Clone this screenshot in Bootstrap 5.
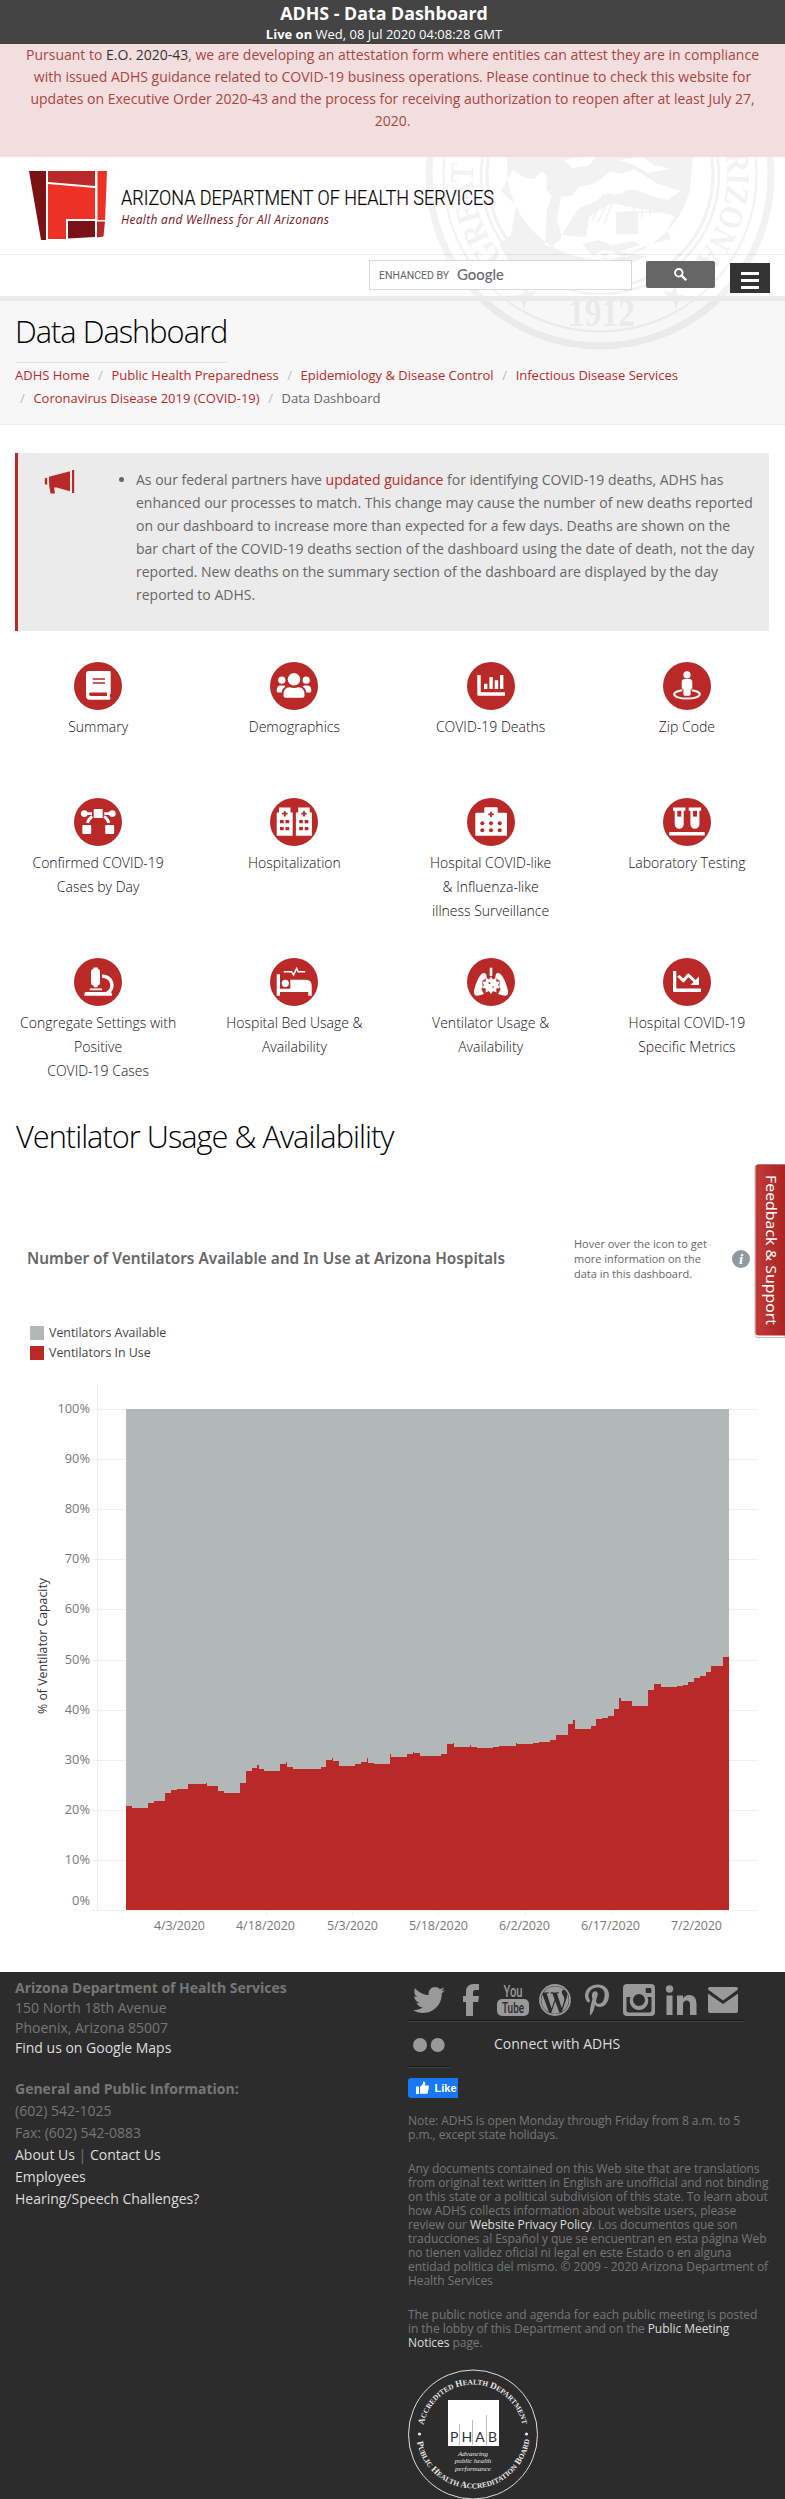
<!DOCTYPE html>
<html lang="en">
<head>
<meta charset="utf-8">
<title>ADHS - Data Dashboard</title>
<meta name="viewport" content="width=device-width, initial-scale=1">
<link href="https://cdn.jsdelivr.net/npm/bootstrap@5.3.0/dist/css/bootstrap.min.css" rel="stylesheet">
<style>
:root{--brick:#b92928}
body{font-family:"Open Sans","Noto Sans",sans-serif;font-size:14px;color:#666;background:#fff;overflow-x:hidden}
a{color:var(--brick);text-decoration:none}
svg text{font-family:"Open Sans","Noto Sans",sans-serif}
.topbar{height:44px;background:#444;padding:1px 17px 0 0}
.topbar h6{font-size:17.8px;font-weight:700;line-height:24px}
.topbar p{font-size:13px;line-height:19px}
.notice{height:113px;background:#f2dede;color:#a94442;line-height:22px;padding:0 20px}
.notice a{color:#333}
.masthead{height:268px}
.brandrow{height:98px;border-bottom:1px solid #eee}
.navrow{height:46px;border-bottom:5px solid #ebebeb;padding:5px 15px 0 0;position:relative;z-index:2}
.seal{position:absolute;left:0;top:0;z-index:1;pointer-events:none}
.gsearch{width:263px;height:30px;border:1px solid #d9d9d9;border-radius:0;background:#fff}
.gbtn{width:69px;height:27px;margin:1px 15px 0 14px;background:#666;border-radius:2px}
.burger{width:40px;height:30px;margin-top:3px;background:#333;padding:4px 0 0;gap:4px}
.burger i{width:18px;height:3px;background:#fff}
.titlerow{height:124px;background:#f7f7f7;border-bottom:1px solid #eee;padding:10px 15px 0}
.big{font-weight:300;font-size:30.8px;letter-spacing:-1px;line-height:41px;color:#000}
.titlerow .big{padding-bottom:10px;border-bottom:1px solid #e3e3e3}
.crumbs{font-size:13px;line-height:23px;padding-top:1px;--bs-breadcrumb-divider-color:#bbb}
.crumbs .breadcrumb-item+.breadcrumb-item::before{padding:0 8.6px 0 0;color:#bbb}
.crumbs .breadcrumb-item+.breadcrumb-item{padding-left:8.6px}
.crumbs .wraps{padding-left:5px!important}
.crumbs .active{color:#666}
.callout{margin:28px 16px 0 15px;height:178px;background:#ebebeb;border-left:3px solid var(--brick);line-height:23px;padding-top:15px}
.callout svg{margin:2px 0 0 26px}
.callout ul{margin:0 0 0 42px;padding-left:18px;width:637px}
.tiles{margin-top:31px;color:#111;font-weight:300;line-height:24px}
.tiles>div{padding:0 10px;text-align:center;height:136px}
.tiles>.tall{height:160px}
.tiles svg{display:block;margin:0 auto 5px}
.cap{padding:0 0 0 27px;height:45px;margin-top:79px}
.cap h3{width:547px}
.hint{font-size:11px;line-height:15px;width:158px}
.legend-row{font-size:12.4px;line-height:20px;color:#444;gap:5px}
.legend-row i{width:14px;height:14px}
.tab{position:absolute;right:0;top:1163px}
footer{background:#2c2c2c;color:#777;height:527px}
footer a{color:#ddd}
.addr{padding:6px 0 0 15px;width:408px}
.right{width:363px;font-size:12px;line-height:14px}
.right p{letter-spacing:-.05px}
.right p a{font-weight:500}
.soc{width:42px;height:50px;border-bottom:1px solid #444;box-shadow:inset 0 -1px #191919;padding:12px 5px 0;fill:#999}
.like{width:50px;height:20px;background:#1877f2;border-radius:3px 0 0 3px}
</style>
</head>
<body class="position-relative">
<div class="topbar text-white text-center">
  <h6 class="m-0">ADHS - Data Dashboard</h6>
  <p class="m-0"><b>Live on</b> Wed, 08 Jul 2020 04:08:28 GMT</p>
</div>
<div class="notice text-center">Pursuant to <a href="#">E.O. 2020-43</a>, we are developing an attestation form where entities can attest they are in compliance with issued ADHS guidance related to COVID-19 business operations. Please continue to check this website for updates on Executive Order 2020-43 and the process for receiving authorization to reopen after at least July 27, 2020.</div>

<header class="masthead position-relative overflow-hidden">
  <div class="brandrow">
    <svg width="520" height="97" viewBox="0 157 520 97">
      <path fill="#7a1216" d="M29 171h17v69h-5z"/>
      <path fill="#b92928" d="M48 171h47v15l-47-4z"/>
      <path fill="#ee3127" d="M97.500 171h9.500l-2 49h-7.500z"/>
      <path fill="#ee3127" d="M48 184l47 4v31H66v20H48z"/>
      <path fill="#7a1216" d="M68 221h27v16l-27 1.500z"/>
      <path fill="#b92928" d="M97 221.500h8l-1.500 15-6.500 1z"/>
      <text x="121" y="205" font-size="21" font-weight="300" fill="#000" stroke="#000" stroke-width=".2" textLength="373" lengthAdjust="spacingAndGlyphs" style="font-family:Roboto,sans-serif">ARIZONA DEPARTMENT OF HEALTH SERVICES</text>
      <text x="121" y="224" font-size="12" font-weight="500" font-style="italic" fill="#7a1216" textLength="208">Health and Wellness for All Arizonans</text>
    </svg>
  </div>
  <div class="navrow d-flex justify-content-end">
    <div class="gsearch">
      <svg width="150" height="28"><text x="9" y="18" font-size="10.500" fill="#5f6368" textLength="70" lengthAdjust="spacingAndGlyphs" style="font-family:Roboto,sans-serif">ENHANCED BY</text><text x="87" y="18.500" font-size="16" font-weight="500" fill="#666a6e" textLength="47" lengthAdjust="spacingAndGlyphs" style="font-family:Lato,sans-serif">Google</text></svg>
    </div>
    <div class="gbtn d-flex justify-content-center align-items-center">
      <svg width="13" height="13" viewBox="0 0 13 13" fill="none" stroke="#fff"><circle cx="4.800" cy="4.800" r="3.800" stroke-width="1.800"/><path d="M7.600 7.600l4.600 4.600" stroke-width="2.300"/></svg>
    </div>
    <div class="burger d-flex flex-column align-items-center justify-content-center"><i></i><i></i><i></i></div>
  </div>
  <div class="titlerow">
    <h1 class="big m-0 d-inline-block align-top">Data Dashboard</h1>
    <ol class="breadcrumb crumbs m-0">
      <li class="breadcrumb-item"><a href="#">ADHS Home</a></li>
      <li class="breadcrumb-item"><a href="#">Public Health Preparedness</a></li>
      <li class="breadcrumb-item"><a href="#">Epidemiology &amp; Disease Control</a></li>
      <li class="breadcrumb-item"><a href="#">Infectious Disease Services</a></li>
      <li class="breadcrumb-item wraps"><a href="#">Coronavirus Disease 2019 (COVID-19)</a></li>
      <li class="breadcrumb-item active">Data Dashboard</li>
    </ol>
  </div>
  <svg class="seal" width="785" height="268" viewBox="0 157 785 268" fill="none" stroke="#000" opacity=".048">
    <circle cx="600" cy="175" r="171" stroke-width="7"/>
    <circle cx="600" cy="175" r="156.500" stroke-width="2"/>
    <circle cx="600" cy="175" r="119" stroke-width="2.500"/>
    <circle cx="600" cy="175" r="113" stroke-width="3"/>
    <path id="ring" stroke="none" d="M502.700 256.600A127 127 0 1 1 697.300 256.600"/>
    <text font-size="33" font-weight="bold" stroke="none" fill="#000" style="font-family:'Liberation Serif',serif"><textPath href="#ring" textLength="580" lengthAdjust="spacingAndGlyphs">GREAT SEAL OF THE STATE OF ARIZONA</textPath></text>
    <text x="568" y="326" font-size="40" font-weight="bold" stroke="none" fill="#000" textLength="67" lengthAdjust="spacingAndGlyphs" style="font-family:'Liberation Serif',serif">1912</text>
    <path stroke="none" fill="#000" d="M514 296l9-2 1-8 5 6 8-1-5 6-6 6-2 7-2-8z M686 296l-9-2-1-8-5 6-8-1 5 6 6 6 2 7 2-8z"/>
    <path stroke="none" fill="#000" fill-rule="evenodd" d="M507.500 157A93 93 0 0 0 690 190L693 157z M513 170l12 8 9 1 8-8 5 5-1 13 6 8-5 12-2 36 7 2 10-10-5-18 4-22 12-2 5-8 18-4 14-12 12 3 12-5 22 14 25 8-15 10-34-12-16 6-8-2-12 8-18 8-16 26 24 2 3-20 22-14 30 6 24 4 10 4-8 12 4 10-16 4-18 6-10 8-16-4-16 10-14 4-16 8-16-2-6-8-10 4-14-10-10 2-10-16 12-10 5-30-15-14z M564 160l14-3h18l-8 9-16 2z M618 160l24-3 12 8 16 4-22 4-14-8z M582 244l16-4 14 5 22-4 6 4-22 7-16-2-8 6z M600 254l20-2 26 4-12 6-24-3z"/>
    <path stroke-width="1.500" d="M588 216l16-22M592 220l14-24M598 222l12-24M604 224l10-26M626 200h40M624 206h42M622 212h36M634 194v26M642 194v24M650 196v20M658 198v16"/>
    <path stroke-width="22" d="M616 223h22"/>
  </svg>
</header>

<section class="callout d-flex">
  <svg class="flex-shrink-0" width="32" height="24" viewBox="0 0 32 24" fill="#b92928"><path d="M5 6.700L26 1.300v20L12.500 17.500H10l1 6H6.500l-1.300-8zM.8 8.500l2.400-1v7.500L.8 14zM28 0h2.200v23H28z"/></svg>
  <ul><li>As our federal partners have <a href="#">updated guidance</a> for identifying COVID-19 deaths, ADHS has enhanced our processes to match. This change may cause the number of new deaths reported on our dashboard to increase more than expected for a few days. Deaths are shown on the<br>bar chart of the COVID-19 deaths section of the dashboard using the date of death, not the day reported. New deaths on the summary section of the dashboard are displayed by the day<br>reported to ADHS.</li></ul>
</section>

<section class="row g-0 tiles">
  <div class="col-3"><svg width="48" height="48"><circle cx="24" cy="24" r="24" fill="#b92928"/><path fill="#fff" d="M15 9h20.500q1.200 0 1.200 1.200V31.500l-.8 1v2.500l.8 1-.8 1.700H16q-4 0-4-4V12q0-3 3-3z"/><path fill="#b92928" d="M18.700 16.200H31v1.600H18.700zM18.700 20.200H31v1.600H18.700zM17 30.500h16v3.500H17q-2 0-2-1.800t2-1.700z"/></svg>Summary</div>
  <div class="col-3"><svg width="48" height="48"><circle cx="24" cy="24" r="24" fill="#b92928"/><g fill="#fff"><circle cx="24" cy="17.300" r="6.200"/><circle cx="11.800" cy="18.200" r="3.600"/><circle cx="36.200" cy="18.200" r="3.600"/><path d="M13.500 33q0-7.700 6-7.700 4.500 1.500 9 0 6 0 6 7.700 0 2.800-2 2.800h-17q-2 0-2-2.800zM6.700 28.500q0-5 4-5h3.300l1.500 1q-3.500 2-3.800 6H7.500q-.8-.5-.8-2zM41.300 28.500q0-5-4-5H34l-1.500 1q3.500 2 3.800 6h4.200q.8-.5.8-2z"/></g></svg>Demographics</div>
  <div class="col-3"><svg width="48" height="48"><circle cx="24" cy="24" r="24" fill="#b92928"/><path fill="#fff" d="M10.300 13h3.400v17.300H38v3.500H11.500q-1.200 0-1.200-1.200zM17 21.700h3.400V27H17zM22.400 15h3.400v12h-3.400zM27.700 18.300h3.500V27h-3.500zM33 13h3.400v14H33z"/></svg>COVID-19 Deaths</div>
  <div class="col-3"><svg width="48" height="48"><circle cx="24" cy="24" r="24" fill="#b92928"/><ellipse cx="24" cy="32.300" rx="12.800" ry="4.300" fill="none" stroke="#fff" stroke-width="2"/><path d="M19.300 25h9.400v5.500h-9.400z" fill="#b92928"/><path fill="#fff" d="M18.700 20q0-3 3-3h4.600q3 0 3 3v6l-1.700 1.500V32q0 1.800-1.600 1.800h-4q-1.600 0-1.600-1.800v-4.500L18.700 26z"/><circle cx="24" cy="12.800" r="3.600" fill="#fff"/></svg>Zip Code</div>

  <div class="col-3 tall"><svg width="48" height="48"><circle cx="24" cy="24" r="24" fill="#b92928"/><g fill="#fff"><rect x="19.700" y="11" width="9" height="9" rx="1"/><rect x="8.300" y="27" width="8.900" height="8.900" rx="1"/><rect x="31.200" y="27" width="8.900" height="8.900" rx="1"/><circle cx="10.300" cy="15.600" r="3.400"/><circle cx="38.300" cy="15.600" r="3.400"/></g><path fill="none" stroke="#fff" stroke-width="2.800" d="M11 15.600h7M30.300 15.600h7M13.500 25q.7-4 4.800-6.500M34.800 25q-.7-4-4.800-6.500"/></svg>Confirmed COVID-19<br>Cases by Day</div>
  <div class="col-3 tall"><svg width="48" height="48"><circle cx="24" cy="24" r="24" fill="#b92928"/><g id="tower"><path fill="#fff" d="M9 9.500h11.500v5h2.200v23.200h-16V14.500H9z"/><path fill="#b92928" d="M13.900 13h1.800v1.800h1.900v1.700h-1.900v1.900h-1.800v-1.900H12v-1.700h1.900zM10 22h3.700v3.300H10zM15.500 22h3.700v3.300h-3.700zM10 29h3.700v3.300H10zM15.500 29h3.700v3.300h-3.700z"/></g><use href="#tower" x="19.200"/></svg>Hospitalization</div>
  <div class="col-3 tall"><svg width="48" height="48"><circle cx="24" cy="24" r="24" fill="#b92928"/><path fill="#fff" d="M17.300 10.500q0-1.200 1.200-1.200h11q1.200 0 1.200 1.200v4.200h8q1.300 0 1.300 1.300v21.700H8.300V16q0-1.300 1.300-1.300h7.700z"/><path fill="#b92928" d="M23.100 13.700h1.800v1.800h1.800v1.700h-1.800v1.900h-1.800v-1.900h-1.800v-1.700h1.800z"/><g fill="#b92928"><circle cx="15.300" cy="25.300" r="2"/><circle cx="24" cy="25.300" r="2"/><circle cx="32.700" cy="25.300" r="2"/><circle cx="15.300" cy="32.300" r="2"/><circle cx="24" cy="32.300" r="2"/><circle cx="32.700" cy="32.300" r="2"/></g></svg>Hospital COVID-like<br>&amp; Influenza-like<br>illness Surveillance</div>
  <div class="col-3 tall"><svg width="48" height="48"><circle cx="24" cy="24" r="24" fill="#b92928"/><g id="tube"><path fill="#fff" d="M10 9.400h12.400v3.400h-1.700v13.400a4.500 4.500 0 0 1-9 0V12.800H10z"/><path fill="#b92928" d="M14.300 12.800h4v5.800h-4z"/></g><use href="#tube" x="15.700"/><path fill="#fff" d="M6.300 34h35.400v3.600H6.300z"/></svg>Laboratory Testing</div>

  <div class="col-3"><svg width="48" height="48"><circle cx="24" cy="24" r="24" fill="#b92928"/><path fill="#fff" d="M19.500 9.500h4.300v1.300q2.200.7 2.200 3V25q0 2-2.500 2.800v1.400h-3.700v-1.400Q17 27 17 25V13.800q0-2.300 2.500-3zM15.700 30.600H28v1.600H15.700zM12 34h25q1.400 1.500 1 3.700H10.300Q10.300 34 12 34z"/><path fill="none" stroke="#fff" stroke-width="3.400" d="M28 18.300a9 9 0 0 1 5 17"/></svg>Congregate Settings with<br>Positive<br>COVID-19 Cases</div>
  <div class="col-3"><svg width="48" height="48"><circle cx="24" cy="24" r="24" fill="#b92928"/><path fill="#fff" d="M6.700 16.300H10v14.400h10.300v-9H36q5.700 0 5.700 6v10h-3.400V34H10v3.700H6.700z"/><circle cx="15.300" cy="25.300" r="3.600" fill="#fff"/><path fill="none" stroke="#fff" stroke-width="1.500" d="M13.700 13.700h7.800l2 3.200L26.700 10.500l1.500 3.200h7"/></svg>Hospital Bed Usage &amp;<br>Availability</div>
  <div class="col-3"><svg width="48" height="48"><circle cx="24" cy="24" r="24" fill="#b92928"/><path fill="#fff" d="M22.700 9.700h2.600V18h-2.600zM15 15.500q4-2 4.500 2.500l.3 1.500-5 4 1 4-1.300 4 2.500 4.500q-4 1.700-8 1.700-2.500-1-2-5Q10 20 15 15.500zM33 15.500q-4-2-4.500 2.500l-.3 1.500 5 4-1 4 1.300 4-2.500 4.500q4 1.700 8 1.700 2.500-1 2-5Q38 20 33 15.500z"/><path fill="#fff" d="M24 18.500l2 3 3.500-2-.3 4 3.800.3-2 3.200 2 3-3.800.6.3 3.900-3.500-1.500-2 3.300-2-3.300-3.500 1.500.3-3.900-3.800-.6 2-3-2-3.200 3.800-.3-.3-4 3.500 2z"/><circle cx="22.500" cy="25" r="1" fill="#b92928"/><circle cx="26" cy="29" r=".8" fill="#b92928"/></svg>Ventilator Usage &amp;<br>Availability</div>
  <div class="col-3"><svg width="48" height="48"><circle cx="24" cy="24" r="24" fill="#b92928"/><path fill="#fff" d="M10 13h3.300v17.600H38V34H11.200Q10 34 10 32.800zM36 18.500V27h-8.500z"/><path fill="none" stroke="#fff" stroke-width="3" stroke-linejoin="round" d="M15.300 17.800l5 5L25.300 17l8 7.800"/></svg>Hospital COVID-19<br>Specific Metrics</div>
</section>

<h2 class="big mb-0 ms-3" style="margin-top:22px">Ventilator Usage &amp; Availability</h2>

<section>
  <div class="cap d-flex align-items-center">
    <h3 class="m-0"><svg class="d-block" width="500" height="24"><text x="0" y="17" font-size="15.500" font-weight="600" fill="#666" textLength="478" lengthAdjust="spacingAndGlyphs" style="font-family:'Noto Sans',sans-serif">Number of Ventilators Available and In Use at Arizona Hospitals</text></svg></h3>
    <div class="hint">Hover over the icon to get<br>more information on the<br>data in this dashboard.</div>
    <svg width="18" height="18"><circle cx="9" cy="9" r="9" fill="#9099a0"/><text x="9" y="14" font-size="15" font-weight="bold" font-style="italic" text-anchor="middle" fill="#fff" style="font-family:'Liberation Serif',serif">i</text></svg>
  </div>
  <div style="margin:42px 0 0 30px">
    <div class="legend-row d-flex align-items-center"><i style="background:#b2b7b7"></i>Ventilators Available</div>
    <div class="legend-row d-flex align-items-center"><i style="background:#b92928"></i>Ventilators In Use</div>
  </div>
  <svg class="d-block" width="785" height="589" viewBox="0 -17 785 589" style="margin-bottom:20px">
    <g stroke="#f0f0f0" shape-rendering="crispEdges">
      <path d="M97.500 4V530M92 29.500H758M92 79.500H758M92 129.500H758M92 179.500H758M92 229.500H758M92 280.500H758M92 330.500H758M92 380.500H758M92 430.500H758M92 480.500H758M92 530.500H758"/>
      <path d="M180.500 530v5M266.500 530v5M352.500 530v5M438.500 530v5M525.500 530v5M611.500 530v5M697.500 530v5"/>
    </g>
    <path fill="#b2b7b7" d="M126 29H729V530H126z"/>
    <g fill="#b92928" shape-rendering="crispEdges">
      <path transform="scale(.33333 .35714)" d="M378 1484V1193H396V1198H444V1184H462V1179H495V1156H513V1148H531V1145H564V1131H618V1128H621V1137H654V1151H672V1156H720V1128H738V1095H756V1086H771V1078H777V1089H792V1095H840V1075H858V1070H861V1084H879V1089H963V1084H978V1064H996V1058H999V1067H1017V1081H1065V1075H1083V1070H1101V1058H1104V1072H1122V1075H1170V1047H1173V1056H1200V1484Z"/>
      <path transform="translate(385 -80) scale(.33333 .42091)" d="M0 1449V1102H15V1079H18V1086H66V1079H84V1074H87V1076H105V1083H168V1079H186V1055H204V1052H207V1062H255V1057H258V1062H276V1064H324V1062H342V1060H393V1052H396V1055H444V1052H462V1050H495V1045H513V1033H549V1007H564V998H570V1019H618V1012H633V995H651V993H669V988H687V972H702V946H708V953H741V965H789V927H807V912H828V919H876V917H894V915H909V908H927V898H945V893H963V884H978V870H1014V848H1032V1449Z"/>
    </g>
    <g font-size="12.800" fill="#777" text-anchor="end">
      <text x="90" y="33">100%</text><text x="90" y="83">90%</text><text x="90" y="133">80%</text><text x="90" y="183">70%</text><text x="90" y="233">60%</text><text x="90" y="284">50%</text><text x="90" y="334">40%</text><text x="90" y="384">30%</text><text x="90" y="434">20%</text><text x="90" y="484">10%</text><text x="90" y="525">0%</text>
    </g>
    <g font-size="12.500" fill="#777">
      <text x="154" y="550" textLength="51">4/3/2020</text><text x="236" y="550" textLength="59">4/18/2020</text><text x="327" y="550" textLength="51">5/3/2020</text><text x="409" y="550" textLength="59">5/18/2020</text><text x="499" y="550" textLength="51">6/2/2020</text><text x="581" y="550" textLength="59">6/17/2020</text><text x="671" y="550" textLength="51">7/2/2020</text>
    </g>
    <text transform="translate(47 334) rotate(-90)" font-size="12" font-weight="500" fill="#333" textLength="136" lengthAdjust="spacingAndGlyphs">% of Ventilator Capacity</text>
  </svg>
</section>

<svg class="tab" width="31" height="176" viewBox="0 0 31 176">
  <defs><linearGradient id="tabFill"><stop offset="0" stop-color="#c23a38"/><stop offset="1" stop-color="#ab2423"/></linearGradient></defs>
  <path d="M31 1.500H4q-3 0-3 3v167q0 3 3 3h27z" fill="#fff" stroke="#bbb"/>
  <path d="M31 1.500H4.500q-3 0-3 3v165q0 3 3 3H31z" fill="url(#tabFill)"/>
  <text transform="translate(11.500 12) rotate(90)" font-size="15" fill="#fff" textLength="150" lengthAdjust="spacingAndGlyphs" style="font-family:'Noto Sans',sans-serif">Feedback &amp; Support</text>
</svg>

<footer class="d-flex overflow-hidden">
  <div class="addr flex-shrink-0">
    <div style="line-height:20px"><b>Arizona Department of Health Services</b><br>150 North 18th Avenue<br>Phoenix, Arizona 85007<br><a href="#">Find us on Google Maps</a></div>
    <div style="line-height:22px;margin-top:20px"><b>General and Public Information:</b><br>(602) 542-1025<br>Fax: (602) 542-0883<br><a href="#">About Us</a> | <a href="#">Contact Us</a><br><a href="#">Employees</a><br><a href="#">Hearing/Speech Challenges?</a></div>
  </div>
  <div class="right">
    <div class="d-flex">
      <div class="soc"><svg width="32" height="32" viewBox="0 0 512 512"><path d="M459.370 151.716c.325 4.548.325 9.097.325 13.645 0 138.720-105.583 298.558-298.558 298.558-59.452 0-114.680-17.219-161.137-47.106 8.447.974 16.568 1.299 25.340 1.299 49.055 0 94.213-16.568 130.274-44.832-46.132-.975-84.792-31.188-98.112-72.772 6.498.974 12.995 1.624 19.818 1.624 9.421 0 18.843-1.300 27.614-3.573-48.081-9.747-84.143-51.980-84.143-102.985v-1.299c13.969 7.797 30.214 12.670 47.431 13.319-28.264-18.843-46.781-51.005-46.781-87.391 0-19.492 5.197-37.360 14.294-52.954 51.655 63.675 129.300 105.258 216.365 109.807-1.624-7.797-2.599-15.918-2.599-24.040 0-57.828 46.782-104.934 104.934-104.934 30.213 0 57.502 12.670 76.670 33.137 23.715-4.548 46.456-13.320 66.599-25.340-7.798 24.366-24.366 44.833-46.132 57.827 21.117-2.273 41.584-8.122 60.426-16.243-14.292 20.791-32.161 39.308-52.628 54.253z"/></svg></div>
      <div class="soc"><svg width="32" height="32"><path d="M24 0v6h-3.500Q18 6 18 8.500V12h6l-.8 6H18v14h-7V18H8v-6h3V8q0-8 8-8z"/></svg></div>
      <div class="soc"><svg width="32" height="32"><text x="6.500" y="13" font-size="16" font-weight="500" textLength="19" lengthAdjust="spacingAndGlyphs" style="font-family:Roboto,sans-serif">You</text><rect y="15" width="32" height="17" rx="5"/><text x="5" y="28.500" font-size="14.500" font-weight="500" fill="#2c2c2c" textLength="22" lengthAdjust="spacingAndGlyphs" style="font-family:Roboto,sans-serif">Tube</text></svg></div>
      <div class="soc"><svg width="32" height="32" viewBox="0 0 16 16"><circle cx="8" cy="8" r="7.500" fill="none" stroke="#999" stroke-width=".9"/><path d="M12.633 7.653c0-.848-.305-1.435-.566-1.892l-.08-.13c-.317-.51-.594-.958-.594-1.480 0-.63.478-1.218 1.152-1.218q.03 0 .058.003l.031.003A6.840 6.840 0 0 0 8 1.137 6.860 6.860 0 0 0 2.266 4.230c.16.005.313.009.442.009.717 0 1.828-.087 1.828-.087.37-.022.414.521.044.565 0 0-.371.044-.785.065l2.500 7.434 1.500-4.506-1.070-2.929c-.369-.022-.719-.065-.719-.065-.37-.022-.326-.588.043-.566 0 0 1.134.087 1.808.087.718 0 1.830-.087 1.830-.087.37-.022.413.522.043.566 0 0-.372.043-.785.065l2.480 7.377.684-2.287.054-.173c.27-.86.469-1.495.469-2.046zM1.137 8a6.860 6.860 0 0 0 3.868 6.176L1.730 5.206A6.800 6.800 0 0 0 1.137 8M6.061 14.583 8.121 8.600l2.109 5.780q.02.05.049.094a6.850 6.850 0 0 1-4.218.109m7.960-9.876q.046.328.047.706c0 .696-.13 1.479-.522 2.458l-2.096 6.060a6.860 6.860 0 0 0 2.572-9.224z"/></svg></div>
      <div class="soc"><svg width="32" height="32" viewBox="-64 0 512 512"><path d="M204 6.500C101.400 6.500 0 74.900 0 185.600 0 256 39.600 296 63.600 296c9.900 0 15.600-27.600 15.600-35.400 0-9.300-23.700-29.100-23.700-67.800 0-80.400 61.200-137.400 140.400-137.400 68.100 0 118.500 38.700 118.500 109.800 0 53.100-21.300 152.700-90.300 152.700-24.900 0-46.200-18-46.200-43.800 0-37.800 26.400-74.400 26.400-113.400 0-66.200-93.900-54.200-93.900 25.800 0 16.800 2.100 35.400 9.600 50.700-13.800 59.400-42 147.900-42 209.100 0 18.900 2.700 37.500 4.500 56.400 3.400 3.800 1.700 3.400 6.900 1.500 50.400-69 48.600-82.500 71.400-172.800 12.300 23.400 44.100 36 69.300 36 106.200 0 153.900-103.500 153.900-196.800C384 71.300 298.200 6.500 204 6.500z"/></svg></div>
      <div class="soc"><svg width="32" height="32"><path fill-rule="evenodd" d="M4 0h24q4 0 4 4v24q0 4-4 4H4q-4 0-4-4V4q0-4 4-4zM23.500 4q-.8 0-.8.800v3.500q0 .8.800.8h4q.8 0 .8-.8V4.800q0-.8-.8-.8zM3.500 13v13q0 2.500 2.500 2.500h20q2.500 0 2.500-2.500V13H24.500a9.300 9.300 0 1 1-17 0zM16 10a6 6 0 1 0 0 12 6 6 0 0 0 0-12z"/></svg></div>
      <div class="soc"><svg width="32" height="32"><circle cx="4.500" cy="5" r="3.700"/><path d="M1.500 11.500h6V31h-6zM12 11.500h6v3q2-3.500 6-3.500 7.500 0 7.500 9V31h-6.500V21q0-4.500-3.200-4.500Q18 16.500 18 21v10h-6z"/></svg></div>
      <div class="soc"><svg width="32" height="32"><path d="M1 5q0-2 2-2h26q2 0 2 2v.5L16 16.500 1 5.500zM1 9.500l15 10.500L31 9.500V27q0 2-2 2H3q-2 0-2-2z"/></svg></div>
    </div>
    <div class="d-flex">
      <div class="soc" style="height:46px;padding-top:16px"><svg width="32" height="15"><circle cx="7" cy="7" r="7"/><circle cx="24.700" cy="7" r="7"/></svg></div>
      <a href="#" style="font-size:14px;line-height:20px;margin:12px 0 0 44px">Connect with ADHS</a>
    </div>
    <div class="like" style="margin:10px 0 16px"><svg class="d-block" width="50" height="20" fill="#fff"><path d="M8 8.500h3V16H8zM12 9l2.500-2.500.8-3q1.900-.3 2 1.500l-.3 2.500h3q1.300.3.900 1.600l-1 5.400q-.4 1.300-1.500 1.300H12z"/><text x="26.500" y="14" font-size="11" font-weight="bold" textLength="22" style="font-family:'Liberation Sans',sans-serif">Like</text></svg></div>
    <p style="margin-bottom:20px">Note: ADHS is open Monday through Friday from 8 a.m. to 5<br>p.m., except state holidays.</p>
    <p class="text-nowrap" style="margin-bottom:20px">Any documents contained on this Web site that are translations<br>from original text written in English are unofficial and not binding<br>on this state or a political subdivision of this state. To learn about<br>how ADHS collects information about website users, please<br>review our <a href="#">Website Privacy Policy</a>. Los documentos que son<br>traducciones al Español y que se encuentran en esta página Web<br>no tienen validez oficial ni legal en este Estado o en alguna<br>entidad politica del mismo. © 2009 - 2020 Arizona Department of<br>Health Services</p>
    <p style="margin-bottom:19px">The public notice and agenda for each public meeting is posted<br>in the lobby of this Department and on the <a href="#">Public Meeting<br>Notices</a> page.</p>
    <svg class="d-block" width="131" height="131" viewBox="0 0 131 131" fill="#e8e8e8">
      <circle cx="65" cy="65.500" r="64.500" fill="none" stroke="#ddd"/>
      <path id="arcTop" fill="none" d="M15.500 56A50.500 50.500 0 0 1 114.500 56"/>
      <path id="arcBot" fill="none" d="M9 73A57 57 0 0 0 121 73"/>
      <text font-size="9" font-weight="bold" style="font-family:'Liberation Serif',serif"><textPath href="#arcTop" textLength="138" lengthAdjust="spacingAndGlyphs">A<tspan font-size="7.300">CCREDITED</tspan> H<tspan font-size="7.300">EALTH</tspan> D<tspan font-size="7.300">EPARTMENT</tspan></textPath></text>
      <text font-size="9" font-weight="bold" style="font-family:'Liberation Serif',serif"><textPath href="#arcBot" textLength="160" lengthAdjust="spacingAndGlyphs">P<tspan font-size="7.300">UBLIC</tspan> H<tspan font-size="7.300">EALTH</tspan> A<tspan font-size="7.300">CCREDITATION</tspan> B<tspan font-size="7.300">OARD</tspan></textPath></text>
      <circle cx="11.500" cy="65" r="1.600"/><circle cx="118.500" cy="65" r="1.600"/>
      <rect x="40" y="31" width="51" height="46" fill="#fff"/>
      <path stroke="#bbb" d="M51.500 55v21M64.500 51v25M78.500 46v30"/>
      <text x="42" y="73" font-size="14" fill="#333" textLength="47" style="font-family:Lato,sans-serif">PHAB</text>
      <g font-size="7" font-style="italic" text-anchor="middle"><text x="65" y="86.500" style="font-family:'Liberation Serif',serif">Advancing</text><text x="65" y="94" style="font-family:'Liberation Serif',serif">public health</text><text x="65" y="101.500" style="font-family:'Liberation Serif',serif">performance</text></g>
    </svg>
  </div>
</footer>
<script src="https://cdn.jsdelivr.net/npm/bootstrap@5.3.0/dist/js/bootstrap.bundle.min.js"></script>
</body>
</html>
